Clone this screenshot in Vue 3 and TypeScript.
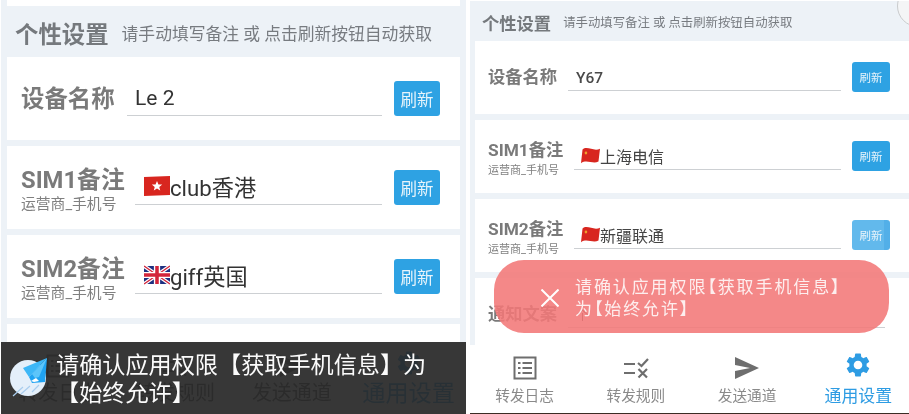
<script setup lang="ts">
interface Row { label: string; sub?: string; value: string; flag?: string; hot?: boolean }
interface Tab { name: string; icon: string; active?: boolean }
const leftRows: Row[] = [
  { label: '设备名称', value: 'Le 2' },
  { label: 'SIM1备注', sub: '运营商_手机号', value: 'club香港', flag: 'hk' },
  { label: 'SIM2备注', sub: '运营商_手机号', value: 'giff英国', flag: 'uk' },
]
const rightRows: Row[] = [
  { label: '设备名称', value: 'Y67' },
  { label: 'SIM1备注', sub: '运营商_手机号', value: '上海电信', flag: 'cn' },
  { label: 'SIM2备注', sub: '运营商_手机号', value: '新疆联通', flag: 'cn', hot: true },
]
const tabs: Tab[] = [
  { name: '转发日志', icon: 'list' },
  { name: '转发规则', icon: 'rule' },
  { name: '发送通道', icon: 'send' },
  { name: '通用设置', icon: 'gear', active: true },
]
const screens = [
  { cls: 'left', rows: leftRows, extra: false },
  { cls: 'right', rows: rightRows, extra: true },
]
</script>

<template>
  <div class="root">
    <section v-for="s in screens" :key="s.cls" class="screen" :class="s.cls">
      <div class="stub"></div>
      <div class="head">
        <span class="title">个性设置</span>
        <span class="hint">请手动填写备注 或 点击刷新按钮自动获取</span>
      </div>
      <div v-for="r in s.rows" :key="r.label" class="card" :class="{ sim: r.sub }">
        <div class="label">
          <div class="name">{{ r.label }}</div>
          <div v-if="r.sub" class="sub">{{ r.sub }}</div>
        </div>
        <div class="input">
          <svg v-if="r.flag === 'hk'" class="flag" viewBox="0 0 25 20" preserveAspectRatio="none">
            <path d="M0 1l25-1v19L0 20z" fill="#d8261f" />
            <path d="M12.5 5l1.4 3.4 3.6.2-2.8 2.3.9 3.5-3.1-1.9-3.1 1.9.9-3.5-2.8-2.3 3.6-.2z" fill="#fff" />
          </svg>
          <svg v-else-if="r.flag === 'uk'" class="flag" viewBox="0 0 25 20" preserveAspectRatio="none">
            <path d="M0 1h25v18H0z" fill="#1d2f80" />
            <path d="M0 1l25 18M25 1L0 19" stroke="#fff" stroke-width="3.6" />
            <path d="M0 1l25 18M25 1L0 19" stroke="#d3243a" stroke-width="1.4" />
            <path d="M12.5 1v18M0 10h25" stroke="#fff" stroke-width="6" />
            <path d="M12.5 1v18M0 10h25" stroke="#d3243a" stroke-width="3.4" />
          </svg>
          <svg v-else-if="r.flag === 'cn'" class="flag" viewBox="0 0 25 20" preserveAspectRatio="none">
            <path d="M2 3c6-5 15 3 23-1l-2 15c-7 4-15-3-23 2z" fill="#d8261f" />
            <circle cx="6.5" cy="7" r="1.7" fill="#eea12c" />
          </svg>
          <span class="value">{{ r.value }}</span>
        </div>
        <button class="refresh" :class="{ hot: r.hot }" type="button">刷新</button>
      </div>
      <div class="card last">
        <div v-if="s.extra" class="label"><div class="name">通知文案</div></div>
        <div v-if="s.extra" class="input"><span class="value thin">个</span></div>
      </div>
      <nav class="nav">
        <div v-for="t in tabs" :key="t.name" class="tab" :class="{ active: t.active }">
          <svg class="icon" :viewBox="t.icon === 'gear' ? '2 2 20 20' : '0 0 24 24'">
            <g v-if="t.icon === 'list'" fill="none" stroke="currentColor">
              <rect x="1.5" y="1.5" width="21" height="21" stroke-width="2" />
              <path d="M5 7h2.5M9.5 7H19M5 12h2.5M9.5 12H19M5 17h2.5M9.5 17H19" stroke-width="2" />
            </g>
            <g v-else-if="t.icon === 'rule'" fill="none" stroke="currentColor" stroke-width="2.2">
              <path d="M0 8h11M0 17h11" />
              <path d="M14 7l3.5 3L24 3M14.5 13l8.5 8.5M23 13l-8.5 8.5" />
            </g>
            <path v-else-if="t.icon === 'send'" d="M0 1l24 11L0 23v-8l15-3L0 9z" fill="currentColor" />
            <path v-else fill="currentColor" d="M19.14 12.94c.04-.3.06-.61.06-.94 0-.32-.02-.64-.07-.94l2.03-1.58c.18-.14.23-.41.12-.61l-1.92-3.32c-.12-.22-.37-.29-.59-.22l-2.39.96c-.5-.38-1.03-.7-1.62-.94l-.36-2.54c-.04-.24-.24-.41-.48-.41h-3.84c-.24 0-.43.17-.47.41l-.36 2.54c-.59.24-1.13.57-1.62.94l-2.39-.96c-.22-.08-.47 0-.59.22L2.74 8.87c-.12.21-.08.47.12.61l2.03 1.58c-.05.3-.09.63-.09.94s.02.64.07.94l-2.03 1.58c-.18.14-.23.41-.12.61l1.92 3.32c.12.22.37.29.59.22l2.39-.96c.5.38 1.03.7 1.62.94l.36 2.54c.05.24.24.41.48.41h3.84c.24 0 .44-.17.47-.41l.36-2.54c.59-.24 1.13-.56 1.62-.94l2.39.96c.22.08.47 0 .59-.22l1.92-3.32c.12-.22.07-.47-.12-.61l-2.01-1.58zM12 15.6c-1.98 0-3.6-1.62-3.6-3.6s1.62-3.6 3.6-3.6 3.6 1.62 3.6 3.6-1.62 3.6-3.6 3.6z" />
          </svg>
          <span class="tab-name">{{ t.name }}</span>
        </div>
      </nav>

      <div v-if="s.cls === 'left'" class="toast-dark">
        <svg class="logo" viewBox="0 0 37 40">
          <circle cx="18" cy="21" r="18" fill="#e4effa" />
          <path d="M37 1L13 11l6 9z" fill="#3db7f7" />
          <path d="M37 1L19 20l3 6 13-1z" fill="#1fa3f2" />
          <path d="M37 1L22 17l3 4 4-1z" fill="#5cc5fa" />
          <path d="M21 24l5-3 3 3-5 1z" fill="#fff" />
          <path d="M3 39l10-9M11 37l9-8M22 35l7-7" stroke="#a9cdee" stroke-width="1.2" fill="none" />
        </svg>
        <p class="toast-dark-text">请确认应用权限【获取手机信息】为<br />【始终允许】</p>
      </div>
      <div v-else class="toast-red">
        <svg class="cross" viewBox="0 0 18 18">
          <path d="M0.5 0.5l17 17M17.5 0.5l-17 17" stroke="#fff" stroke-width="2" fill="none" />
        </svg>
        <p class="toast-red-text">请确认应用权限【获取手机信息】<br />为【始终允许】</p>
      </div>
      <div v-if="s.cls === 'right'" class="arc"></div>
    </section>
  </div>
</template>

<style>
html, body { margin: 0; padding: 0; background: #fff; }
</style>

<style scoped>
.root {
  width: 909px;
  height: 414px;
  display: flex;
  overflow: hidden;
  background: #fff;
  font-family: Roboto, "Noto Sans CJK SC", sans-serif;
  filter: blur(0.35px);
}
.screen { position: relative; overflow: hidden; background: #edf2f7; box-sizing: border-box; }
.card { background: #fff; display: flex; align-items: flex-start; box-sizing: border-box; }
.stub { background: #fff; }
.head { display: flex; align-items: center; color: #75797d; box-sizing: border-box; padding-top: 2px; }
.title { font-weight: 700; white-space: nowrap; }
.hint { color: #777b80; white-space: nowrap; }
.label { color: #7a7a7a; font-weight: 700; flex: none; }
.name { white-space: nowrap; }
.sub { font-weight: 400; color: #808080; white-space: nowrap; }
.input { display: flex; align-items: center; box-sizing: border-box; border-bottom: 1.5px solid #cdd0d3; flex: 1; min-width: 0; color: #333; }
.value { white-space: nowrap; }
.refresh {
  flex: none; border: 0; padding: 0; background: #2ea2e3; color: #e8f4fb;
  font-family: inherit; border-radius: 3px;
}
.refresh.hot { background: linear-gradient(90deg, #62b9ec 85%, #52afe8 85%); }
.flag { flex: none; }
.nav { position: absolute; left: 0; right: 0; bottom: 0; display: flex; background: #fff; box-sizing: border-box; }
.tab { flex: 1; display: flex; flex-direction: column; align-items: center; color: #6e6e6e; }
.tab .tab-name { color: #8a8a8a; white-space: nowrap; }
.tab.active, .tab.active .tab-name { color: #2e9ce3; }
.tab.active .icon { margin-top: -3px; margin-bottom: 3px; }

/* left phone */
.left { width: 465px; height: 414px; margin-left: 1px; padding: 0 6px; }
.left .stub { height: 6px; }
.left .head { height: 51px; padding-left: 8px; gap: 13px; }
.left .title { font-size: 23.4px; }
.left .hint { font-size: 16.8px; }
.left .card { height: 83px; margin-bottom: 6px; padding: 24px 20px 0 14px; gap: 12px; }
.left .card.last { height: 60px; }
.left .name { font-size: 23.4px; line-height: 36px; }
.left .sim .name { font-size: 23.8px; line-height: 32px; margin-top: -6px; }
.left .sub { font-size: 14.8px; line-height: 18px; margin-top: -1px; }
.left .label { width: 94px; }
.left .sim .label { width: 102px; }
.left .input { height: 35px; }
.left .card:not(.sim) .input { padding-left: 8px; font-size: 21px; }
.left .sim .input { padding-left: 9px; font-size: 22.2px; padding-bottom: 2px; }
.left .sim .input .flag { width: 26px; height: 20px; }
.left .refresh { width: 46px; height: 35px; font-size: 16.5px; }
.left .nav { height: 72px; padding-top: 12px; left: -1px; right: -1px; }
.left .icon { width: 24px; height: 24px; }
.left .tab-name { font-size: 20px; line-height: 28px; margin-top: 1px; color: #555; }
.left .tab.active .tab-name { font-size: 23.2px; }

.toast-dark {
  position: absolute; left: -1px; right: 0; bottom: 0; height: 72px;
  background: rgba(40, 40, 40, 0.93);
}
.logo { position: absolute; left: 10px; top: 15px; width: 37px; height: 40px; }
.toast-dark-text {
  position: absolute; left: 56px; top: 10px; margin: 0;
  font-size: 23.15px; line-height: 28px; color: #fbfbfb; white-space: nowrap;
}

/* right phone */
.right { width: 439px; height: 414px; margin-left: 4px; padding-left: 5px; border-top: 1px solid #fff; }
.right .stub { display: none; }
.right .head { height: 40px; padding-left: 7px; gap: 12px; }
.right .title { font-size: 17.3px; }
.right .hint { font-size: 12.4px; }
.right .card { height: 73px; margin-bottom: 6px; padding: 21px 19px 0 13px; gap: 11px; }
.right .card.last { height: 70px; padding-right: 24px; }
.right .name { font-size: 17.3px; line-height: 30px; }
.right .sim .name { line-height: 26px; margin-top: -4px; }
.right .sub { font-size: 11px; line-height: 14px; margin-top: 1px; }
.right .label { width: 69px; }
.right .sim .label { width: 75px; }
.right .input { height: 29px; border-bottom-width: 1.2px; }
.right .card:not(.sim) .input { padding-left: 8px; padding-top: 3px; font-size: 15.5px; font-weight: 500; color: #4a4a4a; }
.right .sim .input { padding-left: 7px; padding-top: 1px; font-size: 16px; color: #444; }
.right .sim .input .flag { width: 19px; height: 17px; }
.right .thin { font-weight: 400; font-size: 13px; }
.right .refresh { width: 38px; height: 30px; font-size: 11.5px; }
.right .nav { height: 69px; left: -1px; right: -5px; padding-top: 11px; border-bottom: 1px solid #3a2c24; }
.right .icon { width: 24px; height: 24px; }
.right .tab-name { font-size: 14.7px; line-height: 20px; margin-top: 6px; }
.right .tab.active .tab-name { font-size: 16.9px; }
.right .tab:nth-child(2) .icon { width: 26px; }

.toast-red {
  position: absolute; left: 24px; top: 259px; width: 395px; height: 73px;
  border-radius: 30px; background: rgba(243, 120, 120, 0.88);
}
.cross { position: absolute; left: 47px; top: 29px; width: 18px; height: 18px; }
.toast-red-text {
  position: absolute; left: 81px; top: 16px; margin: 0;
  font-size: 17px; line-height: 22px; letter-spacing: 1.9px; color: #fdeeee;
  font-feature-settings: "palt"; white-space: nowrap;
}
.arc { position: absolute; right: -30px; top: -16px; width: 40px; height: 40px; border-radius: 50%; background: #f4f5f6; border: 1px solid #c9cbcd; }
</style>
